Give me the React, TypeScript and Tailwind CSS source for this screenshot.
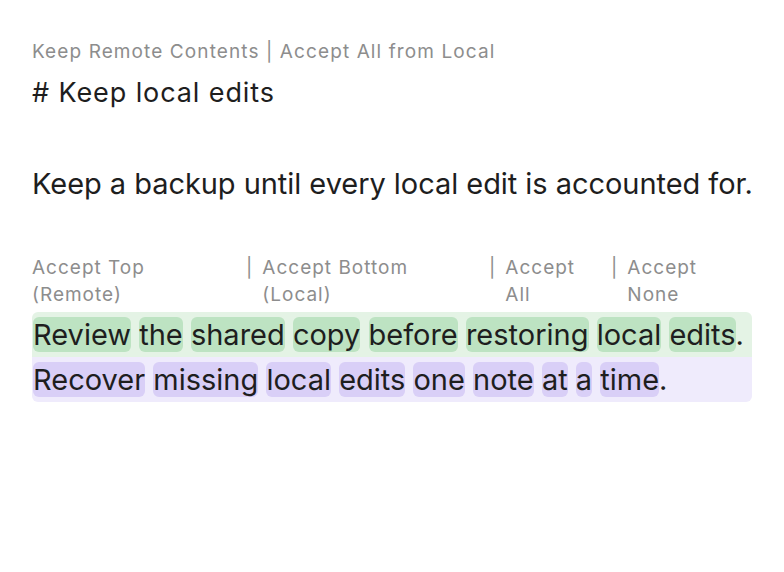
import React from 'react';

const font = { fontFamily: 'Inter, "Noto Sans", sans-serif' };

const options = [
  { lines: ['Accept Top', '(Remote)'], width: 'w-[214px]', bar: false },
  { lines: ['Accept Bottom', '(Local)'], width: 'w-[243px]', bar: true },
  { lines: ['Accept', 'All'], width: 'w-[122px]', bar: true },
  { lines: ['Accept', 'None'], width: 'w-[140px]', bar: true },
];

const remoteWords = ['Review', 'the', 'shared', 'copy', 'before', 'restoring', 'local', 'edits'];
const localWords = ['Recover', 'missing', 'local', 'edits', 'one', 'note', 'at', 'a', 'time'];

function Words({ words, mark }: { words: string[]; mark: string }) {
  return (
    <>
      {words.map((w, i) => (
        <React.Fragment key={i}>
          <span className={`${mark} rounded-[6px]`}>{w}</span>
          {i < words.length - 1 ? ' ' : ''}
        </React.Fragment>
      ))}
      .
    </>
  );
}

export default function App() {
  return (
    <div className="min-h-screen bg-white px-8 pt-[40px] text-[#1e1e1e]" style={font}>
      <div className="text-[19px] leading-[24px] tracking-[1.1px] text-[#8d8d8d]">
        Keep Remote Contents | Accept All from Local
      </div>
      <h1 className="mt-[11px] text-[27px] leading-[36px] tracking-[0.9px] font-normal">
        # Keep local edits
      </h1>

      <p className="mt-[53px] whitespace-nowrap text-[29px] leading-[40px] tracking-[-0.05px]">
        Keep a backup until every local edit is accounted for.
      </p>

      <div className="mt-[50px] flex text-[19px] leading-[27px] tracking-[1px] text-[#8d8d8d]">
        {options.map((o) => (
          <div key={o.lines[0] + o.lines[1]} className={`${o.width} flex shrink-0`}>
            {o.bar && <span className="shrink-0 pr-[9px]">|</span>}
            <div>
              {o.lines.map((l) => (
                <div key={l}>{l}</div>
              ))}
            </div>
          </div>
        ))}
      </div>

      <div className="mt-[4px] w-[720px] overflow-hidden rounded-[6px] text-[29px] leading-[45px]">
        <div className="bg-[#e4f3e5] pl-[1px]">
          <Words words={remoteWords} mark="bg-[#bde3c2]" />
        </div>
        <div className="bg-[#efebfc] pl-[1px]">
          <Words words={localWords} mark="bg-[#d9cff7]" />
        </div>
      </div>
    </div>
  );
}
